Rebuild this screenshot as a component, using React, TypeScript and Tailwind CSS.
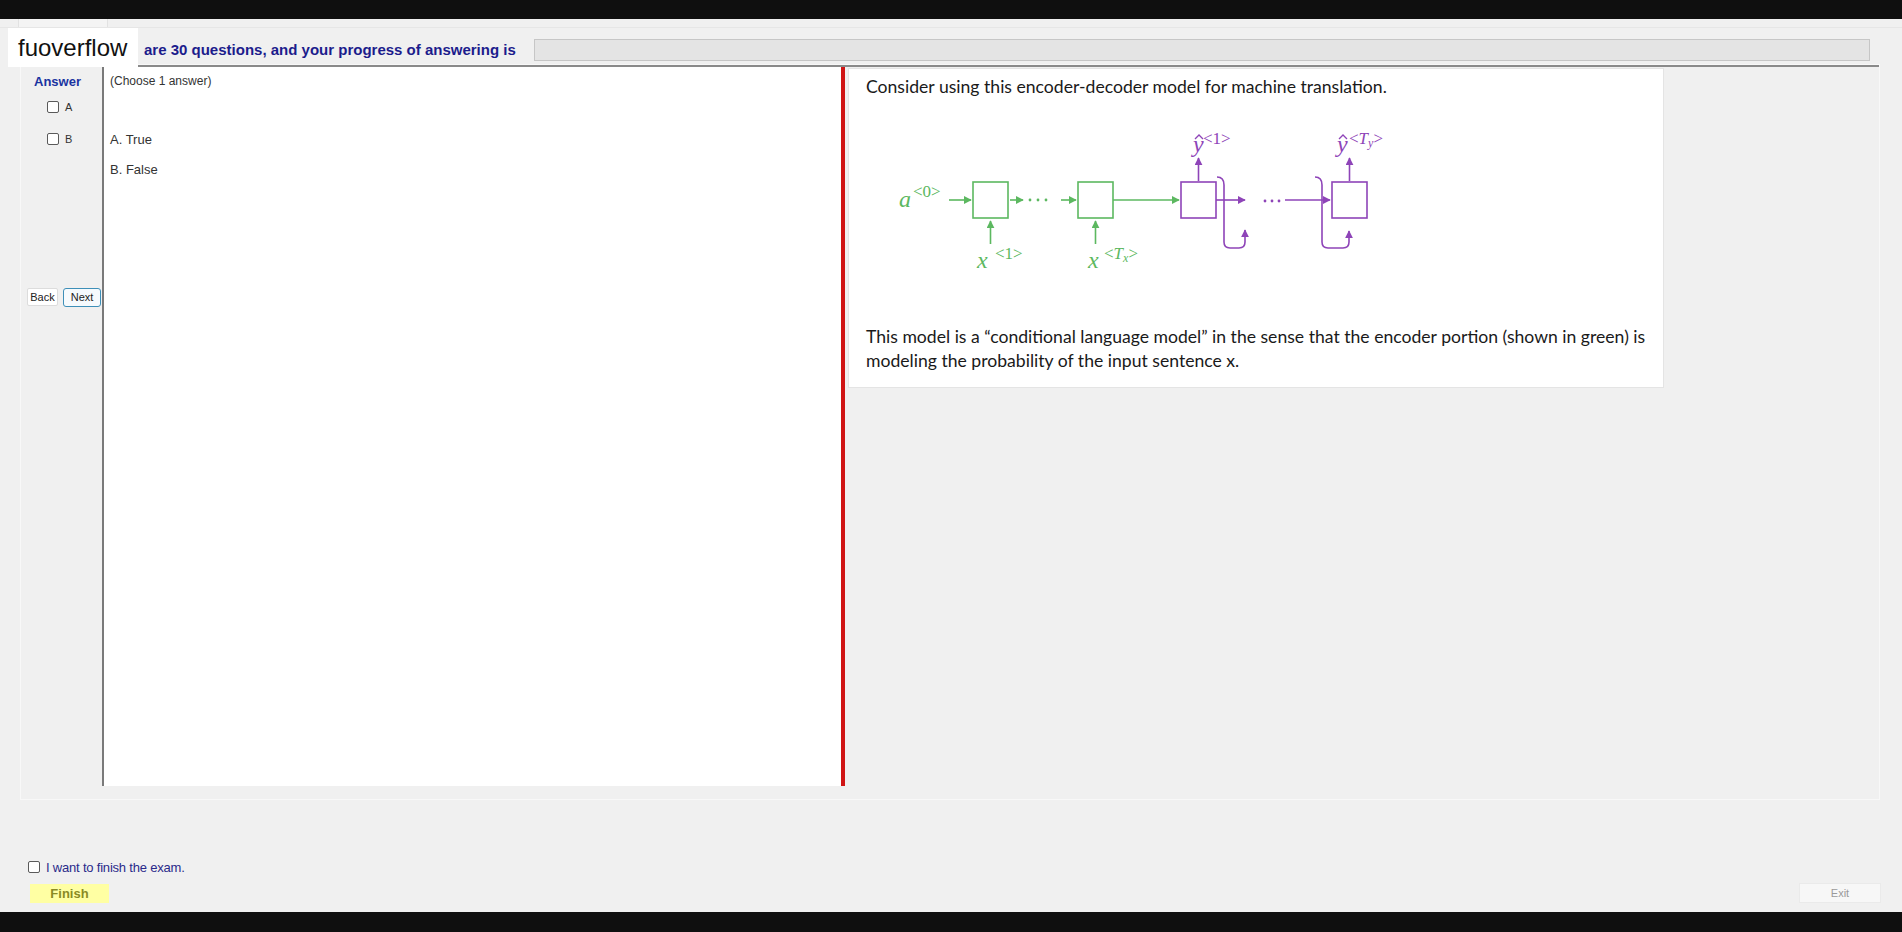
import React from "react";

const GREEN = "#5cb860";
const PURPLE = "#8e44b8";

const Box = () => (
  <span className="inline-block h-[12px] w-[12px] rounded-[2px] border border-[#5a5a5a] bg-white" />
);

const Diagram = () => (
  <svg width="560" height="160" viewBox="0 0 560 160" className="block">
    <defs>
      <marker id="g" viewBox="0 0 10 10" refX="9" refY="5" markerWidth="5" markerHeight="5" orient="auto">
        <path d="M0 0 L10 5 L0 10 z" fill={GREEN} />
      </marker>
      <marker id="p" viewBox="0 0 10 10" refX="9" refY="5" markerWidth="5" markerHeight="5" orient="auto">
        <path d="M0 0 L10 5 L0 10 z" fill={PURPLE} />
      </marker>
    </defs>
    <g fontFamily="'Liberation Serif', serif" fill={GREEN}>
      <text x="38" y="87" fontSize="24" fontStyle="italic">a</text>
      <text x="52" y="77" fontSize="17">&lt;0&gt;</text>
      <text x="116" y="148" fontSize="24" fontStyle="italic">x</text>
      <text x="134" y="139" fontSize="17">&lt;1&gt;</text>
      <text x="227" y="148" fontSize="24" fontStyle="italic">x</text>
      <text x="243" y="139" fontSize="17">
        &lt;<tspan fontStyle="italic">T</tspan>
        <tspan fontSize="12" fontStyle="italic" dy="3">x</tspan>
        <tspan dy="-3">&gt;</tspan>
      </text>
    </g>
    <g fontFamily="'Liberation Serif', serif" fill={PURPLE}>
      <text x="332" y="32" fontSize="24" fontStyle="italic">y</text>
      <text x="342" y="24" fontSize="17">&lt;1&gt;</text>
      <text x="476" y="32" fontSize="24" fontStyle="italic">y</text>
      <text x="488" y="24" fontSize="17">
        &lt;<tspan fontStyle="italic">T</tspan>
        <tspan fontSize="12" fontStyle="italic" dy="3">y</tspan>
        <tspan dy="-3">&gt;</tspan>
      </text>
    </g>
    <g stroke={PURPLE} strokeWidth="1.3" fill="none">
      <path d="M334 19 l4 -4 l4 4" />
      <path d="M478 19 l4 -4 l4 4" />
    </g>
    <g stroke={GREEN} strokeWidth="1.6" fill="none">
      <line x1="88" y1="80" x2="110" y2="80" markerEnd="url(#g)" />
      <rect x="112" y="62" width="35" height="36" />
      <line x1="149" y1="80" x2="162" y2="80" markerEnd="url(#g)" />
      <line x1="200" y1="80" x2="215" y2="80" markerEnd="url(#g)" />
      <rect x="217" y="62" width="35" height="36" />
      <line x1="252" y1="80" x2="318" y2="80" markerEnd="url(#g)" />
      <line x1="129.5" y1="124" x2="129.5" y2="101" markerEnd="url(#g)" />
      <line x1="234.5" y1="124" x2="234.5" y2="101" markerEnd="url(#g)" />
    </g>
    <g fill={GREEN}>
      <circle cx="169" cy="80" r="1.4" />
      <circle cx="177" cy="80" r="1.4" />
      <circle cx="185" cy="80" r="1.4" />
    </g>
    <g stroke={PURPLE} strokeWidth="1.6" fill="none">
      <rect x="320" y="62" width="35" height="36" />
      <rect x="471" y="62" width="35" height="36" />
      <line x1="337.5" y1="61" x2="337.5" y2="38" markerEnd="url(#p)" />
      <line x1="488.5" y1="61" x2="488.5" y2="38" markerEnd="url(#p)" />
      <line x1="355" y1="80" x2="384" y2="80" markerEnd="url(#p)" />
      <line x1="424" y1="80" x2="469" y2="80" markerEnd="url(#p)" />
      <path d="M356 57 Q363 57 363 65 L363 122 Q363 128 369 128 L378 128 Q384 128 384 122 L384 110" markerEnd="url(#p)" />
      <path d="M454 57 Q461 57 461 65 L461 122 Q461 128 467 128 L482 128 Q488 128 488 122 L488 111" markerEnd="url(#p)" />
    </g>
    <g fill={PURPLE}>
      <circle cx="404" cy="81" r="1.4" />
      <circle cx="411" cy="81" r="1.4" />
      <circle cx="418" cy="81" r="1.4" />
    </g>
  </svg>
);

export default function App() {
  return (
    <div className="flex h-[932px] w-[1902px] flex-col overflow-hidden bg-[#0f0f0f] font-['Liberation_Sans',Arial,sans-serif]">
      <div className="h-[19px] shrink-0" />
      <main className="relative flex h-[893px] flex-col bg-[#f0f0f0]">
        {/* faint tab strip */}
        <div className="flex h-[9px] shrink-0 border-b border-[#e6e6e6]">
          <div className="ml-[18px] w-[90px] border-r border-l border-[#e2e2e2] bg-[#f4f4f4]" />
        </div>

        {/* header row */}
        <div className="flex h-[36px] shrink-0 items-center pl-[144px] pr-[32px] pt-[8px]">
          <span className="text-[15px] font-bold text-[#1c1c8c]">
            are 30 questions, and your progress of answering is
          </span>
          <div className="ml-auto h-[22px] w-[1336px] border border-[#c6c6c6] bg-[#e4e4e4]" />
        </div>

        {/* logo overlay */}
        <div className="absolute left-[8px] top-[9px] flex h-[39px] w-[130px] items-center bg-white pl-[10px] text-[24px] text-[#111]">
          fuoverflow
        </div>

        {/* exam frame */}
        <div className="ml-[20px] mr-[22px] flex h-[736px] shrink-0 flex-col border border-[#f8f8f8] pb-[13px]">
          <div className="flex flex-1">
            {/* answer sidebar */}
            <div className="flex w-[81px] shrink-0 flex-col pl-[6px] pt-[7px]">
              <span className="pl-[7px] text-[13px] font-bold text-[#1a33a0]">Answer</span>
              <label className="mt-[7px] flex items-center gap-[6px] pl-[20px] text-[11px] text-[#333]">
                <Box /> A
              </label>
              <label className="mt-[16px] flex items-center gap-[6px] pl-[20px] text-[11px] text-[#333]">
                <Box /> B
              </label>
              <div className="mt-[140px] flex gap-[5px]">
                <button className="h-[18px] w-[31px] rounded-[2px] border border-[#dcdcdc] bg-white text-[11px] text-[#222]">
                  Back
                </button>
                <button className="h-[19px] w-[38px] rounded-[3px] border border-[#3e8fb8] bg-[#f6fafd] text-[11px] text-[#222]">
                  Next
                </button>
              </div>
            </div>

            {/* content */}
            <div className="flex flex-1 flex-col border-t-2 border-[#8a8a8a]">
              <div className="flex flex-1">
                <div className="w-[739px] shrink-0 border-l-2 border-[#7a7a7a] bg-white pl-[6px] pt-[5px] text-[12px] text-[#333]">
                  <p>(Choose 1 answer)</p>
                  <p className="mt-[40px] text-[13px]">A. True</p>
                  <p className="mt-[10px] text-[13px]">B. False</p>
                </div>
                <div className="w-[4px] shrink-0 bg-[#d01515]" />
                <div className="flex-1 bg-[#f0f0f0] pl-[3px] pt-[1px]">
                  <div className="w-[816px] border border-[#e4e4e4] bg-white pb-[14px] pl-[17px] pr-0 pt-[6px] font-['Lato',sans-serif] text-[17.6px] leading-[24px] text-[#1a1a1a]">
                    <p>Consider using this encoder-decoder model for machine translation.</p>
                    <div className="mt-[21px] -ml-[5px]">
                      <Diagram />
                    </div>
                    <p className="mt-[45px]">
                      This model is a “conditional language model” in the sense that the encoder portion (shown in green) is
                      modeling the probability of the input sentence x.
                    </p>
                  </div>
                </div>
              </div>
            </div>
          </div>
        </div>

        {/* finish area */}
        <div className="flex flex-1 flex-col justify-end pb-[9px] pl-[28px] pr-[21px]">
          <label className="flex items-center gap-[6px] text-[13px] tracking-[-0.2px] text-[#2a2a8a]">
            <Box /> I want to finish the exam.
          </label>
          <div className="mt-[6px] flex items-center justify-between">
            <button className="ml-[2px] h-[19px] w-[79px] bg-[#ffffa3] text-[13px] font-bold text-[#8a8a24]">
              Finish
            </button>
            <button className="h-[20px] w-[82px] border border-[#eaeaea] bg-[#f7f7f7] text-[11px] text-[#9a9a9a]">
              Exit
            </button>
          </div>
        </div>
      </main>
      <div className="flex-1" />
    </div>
  );
}
